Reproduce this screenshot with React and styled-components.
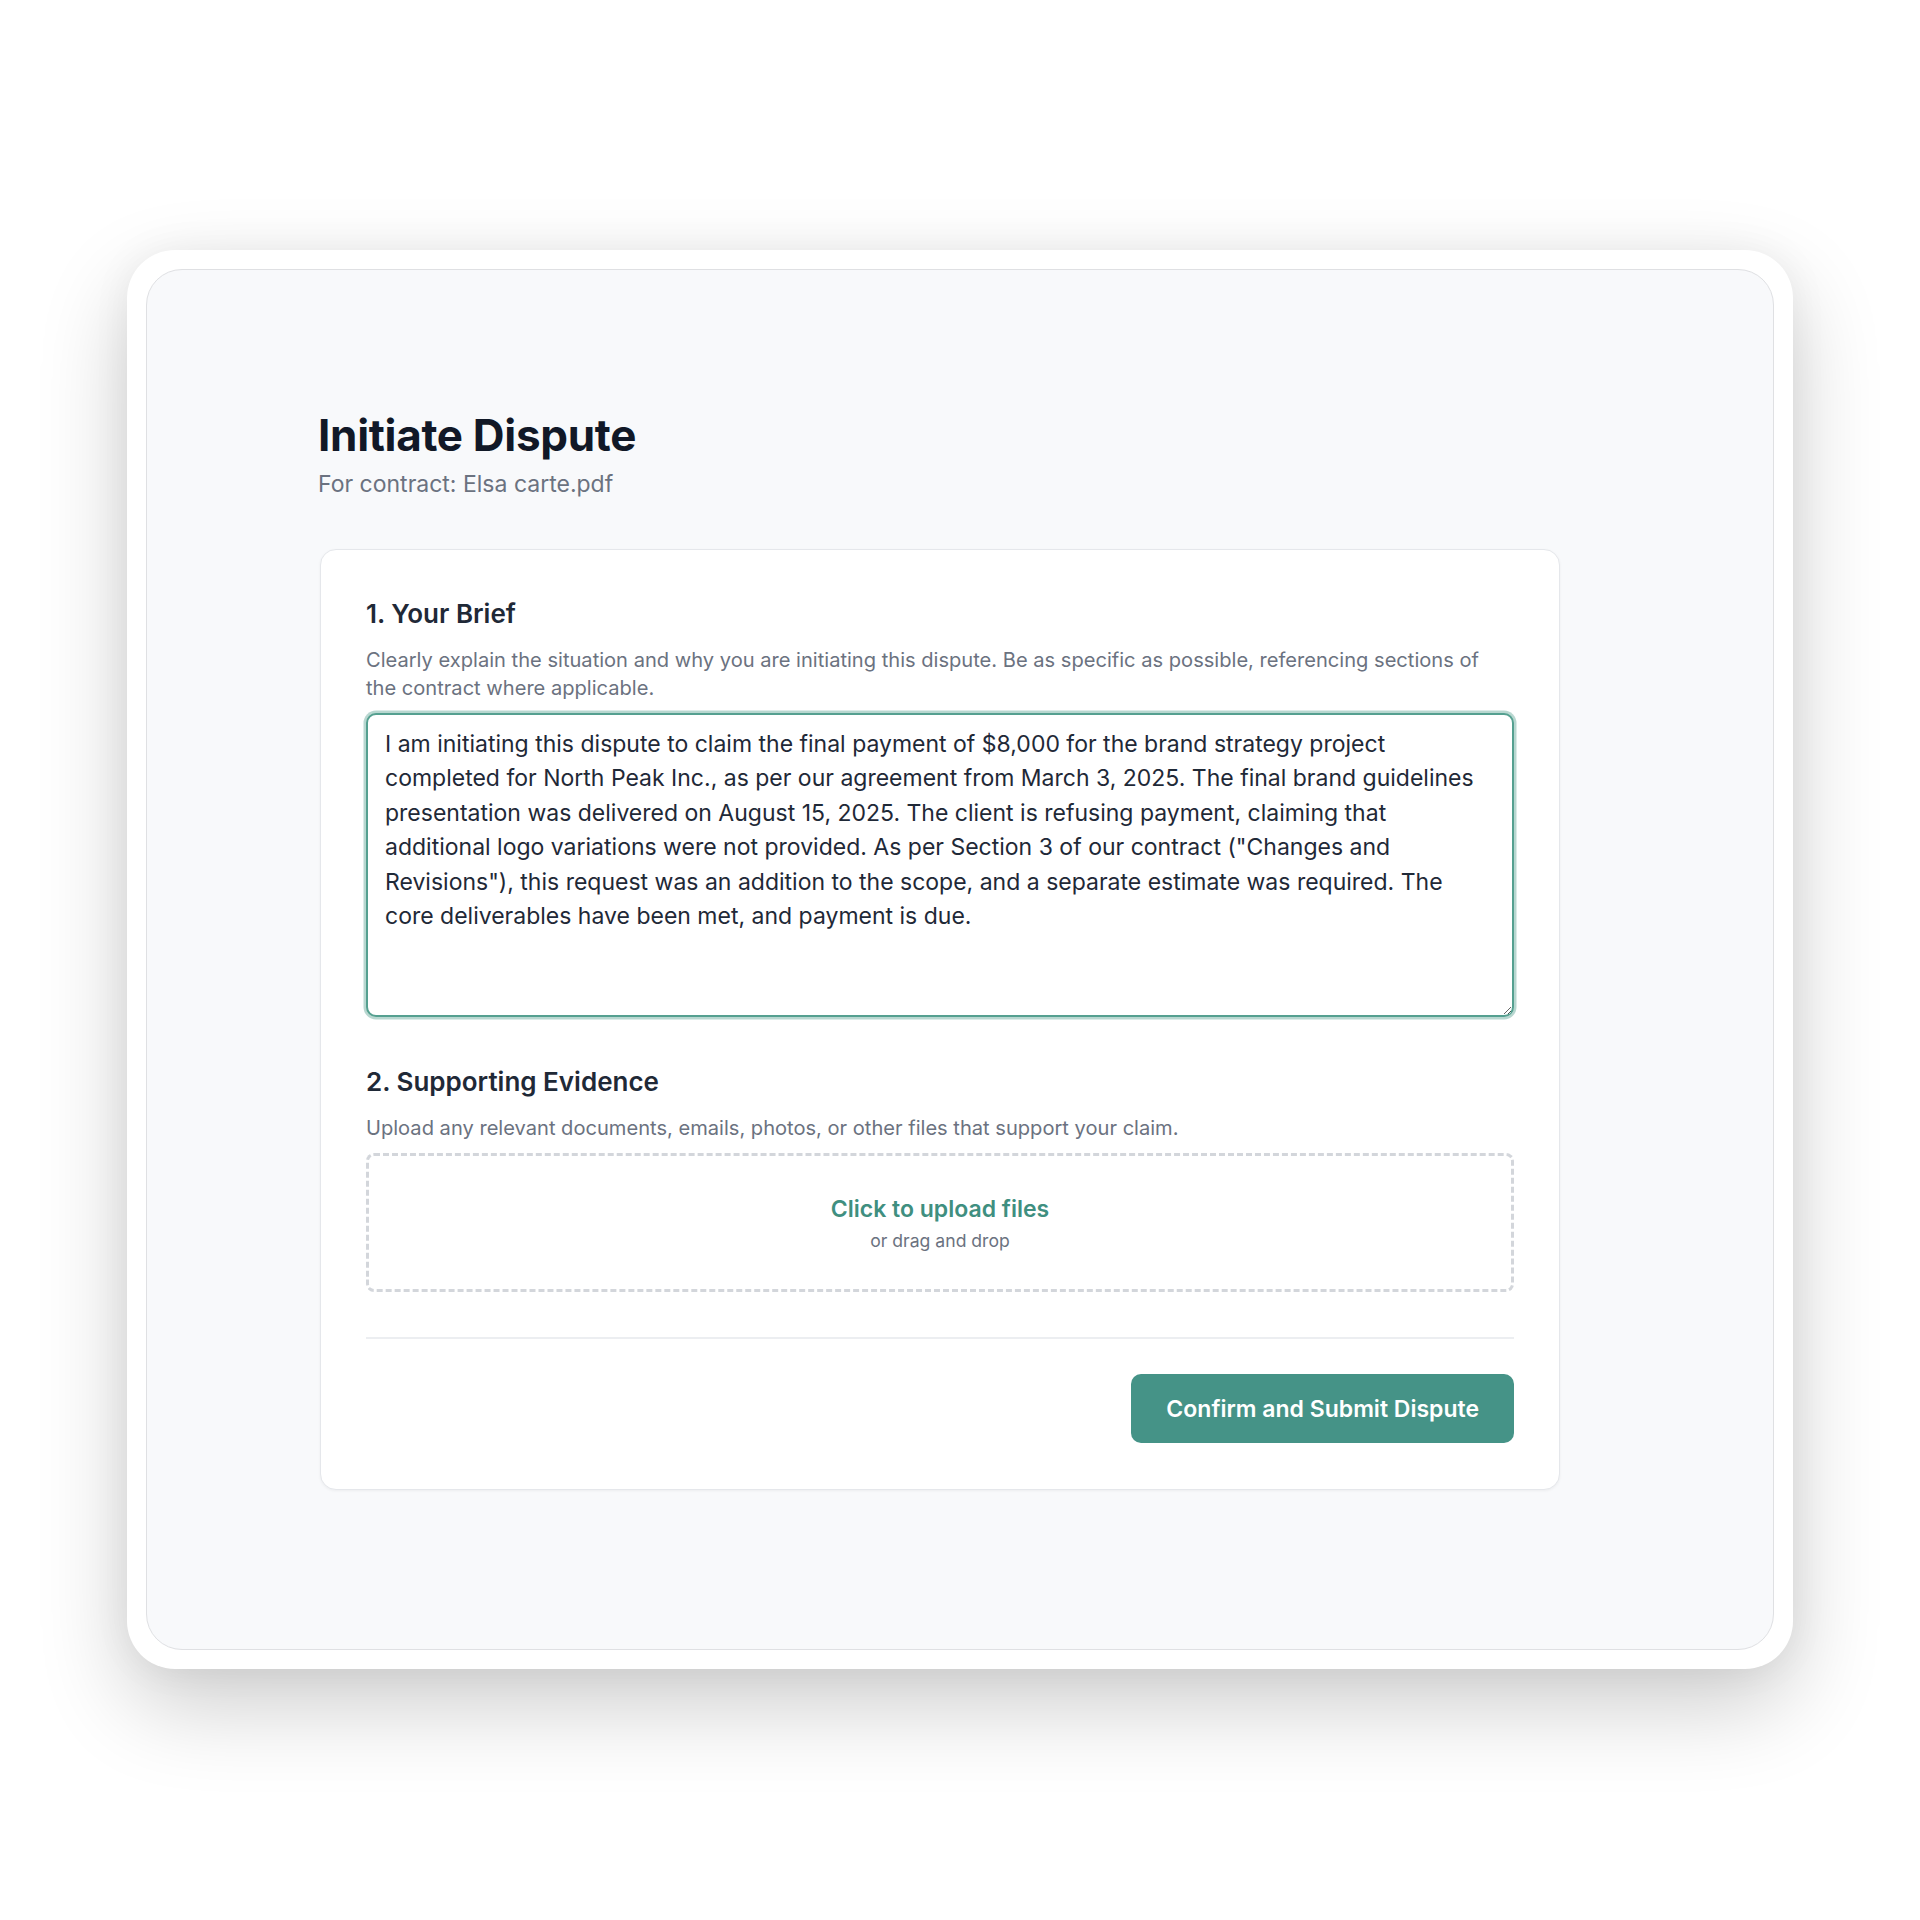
import React, { useEffect, useRef } from 'react';
import styled, { createGlobalStyle } from 'styled-components';

const GlobalStyle = createGlobalStyle`
  html, body {
    margin: 0;
    padding: 0;
    background: #ffffff;
  }
  body {
    font-family: Inter, 'Noto Sans', 'Liberation Sans', sans-serif;
    -webkit-font-smoothing: antialiased;
  }
  * {
    box-sizing: border-box;
  }
`;

const Stage = styled.div`
  width: 1920px;
  height: 1920px;
  padding: 250px 0 0 127px;
`;

const Frame = styled.div`
  width: 1666px;
  height: 1419px;
  padding: 19px;
  background: #ffffff;
  border-radius: 48px;
  box-shadow: 0 36px 90px rgba(0, 0, 0, 0.2), 0 0 40px rgba(0, 0, 0, 0.05);
`;

const Panel = styled.div`
  height: 100%;
  background: #f8f9fb;
  border: 1px solid #dfe0e3;
  border-radius: 36px;
  padding: 139px 0 0 173px;
`;

const Column = styled.div`
  width: 1240px;
`;

const Title = styled.h1`
  margin: 0 0 0 -2px;
  font-size: 44px;
  line-height: 52.8px;
  font-weight: 700;
  color: #111827;
  letter-spacing: -0.3px;
`;

const Subtitle = styled.p`
  margin: 5.5px 0 0 -2px;
  font-size: 23px;
  line-height: 35.2px;
  color: #6b7280;
`;

const Card = styled.div`
  margin-top: 46px;
  background: #ffffff;
  border: 1px solid #e5e7eb;
  border-radius: 16px;
  padding: 45px 45px 46px;
  box-shadow: 0 1px 3px rgba(0, 0, 0, 0.05);
`;

const SectionTitle = styled.h3`
  margin: ${p => (p.$first ? '0' : '46px')} 0 13px;
  font-size: 26px;
  line-height: 38px;
  font-weight: 600;
  color: #1f2937;
`;

const Hint = styled.p`
  margin: 0 0 11px;
  font-size: 20.1px;
  line-height: 28px;
  color: #6b7280;
`;

const Brief = styled.textarea`
  display: block;
  width: 100%;
  height: 304px;
  margin: 0;
  padding: 12px 17px;
  border: 2px solid #55a090;
  border-radius: 10px;
  box-shadow: 0 0 0 2.5px rgba(85, 160, 144, 0.42);
  outline: none;
  font-family: Inter, 'Noto Sans', 'Liberation Sans', sans-serif;
  font-size: 23px;
  line-height: 34.5px;
  color: #1f2937;
  background: #ffffff;
  resize: vertical;
  overflow: hidden;
  caret-color: #111827;
`;

const DropZone = styled.div`
  display: flex;
  flex-direction: column;
  align-items: center;
  padding: 36px 0 35px;
  border: 3px dashed #d3d6db;
  border-radius: 8px;
  cursor: pointer;
`;

const UploadLink = styled.span`
  font-size: 23px;
  line-height: 34.5px;
  font-weight: 600;
  color: #3f8f80;
`;

const UploadNote = styled.span`
  margin-top: 2px;
  font-size: 17.6px;
  line-height: 26px;
  color: #6b7280;
`;

const Divider = styled.div`
  margin-top: 45px;
  border-top: 2px solid #eceef1;
`;

const Actions = styled.div`
  display: flex;
  justify-content: flex-end;
  margin-top: 35px;
`;

const SubmitButton = styled.button`
  height: 69px;
  padding: 0 35px;
  border: none;
  border-radius: 10px;
  background: #459387;
  color: #ffffff;
  font-family: Inter, 'Noto Sans', 'Liberation Sans', sans-serif;
  font-size: 23px;
  font-weight: 600;
  cursor: pointer;
`;

const briefText =
  'I am initiating this dispute to claim the final payment of $8,000 for the brand strategy project completed for North Peak Inc., as per our agreement from March 3, 2025. The final brand guidelines presentation was delivered on August 15, 2025. The client is refusing payment, claiming that additional logo variations were not provided. As per Section 3 of our contract ("Changes and Revisions"), this request was an addition to the scope, and a separate estimate was required. The core deliverables have been met, and payment is due.';

export default function App() {
  const briefRef = useRef(null);

  useEffect(() => {
    const el = briefRef.current;
    if (el) {
      el.focus();
      el.setSelectionRange(el.value.length, el.value.length);
    }
  }, []);

  return (
    <>
      <GlobalStyle />
      <Stage>
        <Frame>
          <Panel>
            <Column>
              <Title>Initiate Dispute</Title>
              <Subtitle>For contract: Elsa carte.pdf</Subtitle>
              <Card>
                <SectionTitle $first>1. Your Brief</SectionTitle>
                <Hint>
                  Clearly explain the situation and why you are initiating this dispute. Be as specific as
                  possible, referencing sections of the contract where applicable.
                </Hint>
                <Brief ref={briefRef} defaultValue={briefText} />

                <SectionTitle>2. Supporting Evidence</SectionTitle>
                <Hint>Upload any relevant documents, emails, photos, or other files that support your claim.</Hint>
                <DropZone>
                  <UploadLink>Click to upload files</UploadLink>
                  <UploadNote>or drag and drop</UploadNote>
                </DropZone>

                <Divider />
                <Actions>
                  <SubmitButton>Confirm and Submit Dispute</SubmitButton>
                </Actions>
              </Card>
            </Column>
          </Panel>
        </Frame>
      </Stage>
    </>
  );
}
